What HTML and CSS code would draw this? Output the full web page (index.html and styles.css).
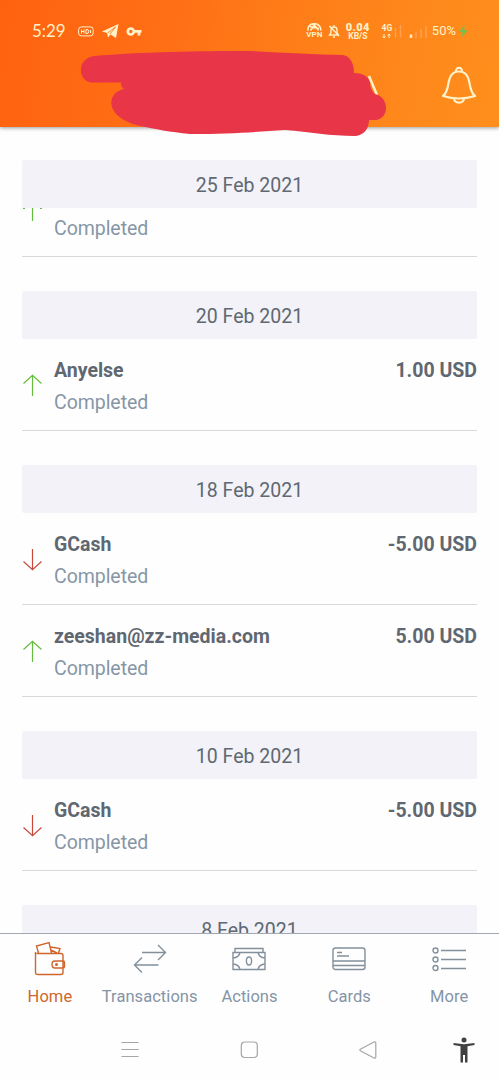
FILE: index.html
```html
<!DOCTYPE html>
<html lang="en">
<head>
<meta charset="utf-8">
<title>Transactions</title>
<link rel="stylesheet" href="styles.css">
</head>
<body>
<div class="app">
  <header class="top">
    <div class="status">
      <span class="clock">5:29</span>
      <svg class="s-hd" width="16" height="11" viewBox="0 0 16 11"><rect x=".6" y=".9" width="14.6" height="9" rx="2.8"/><path d="M3.500 3.500v4M6 3.500v4M3.500 5.500H6M8 3.500v4h1q1.700 0 1.700-2t-1.700-2zM12.500 4v3"/></svg>
      <svg class="s-plane" width="17" height="15" viewBox="0 0 17 15"><path d="M0 7.500 16.500 0 14 14 8.500 10.500 6 13.500 5 9z"/><path class="fold" d="M5.500 9 13.500 3 8 10"/></svg>
      <svg class="s-key" width="16" height="11" viewBox="0 0 16 11"><circle cx="4.800" cy="5.500" r="3"/><path d="M8 5.300h7.500M13 5.500v4"/></svg>
      <div class="status-right">
        <div class="vpn"><svg width="15" height="8" viewBox="0 0 15 8"><path d="M1 7.500C0 -1.500 14 -1.500 14 7.500M3.500 7.500 7.500 2l4 5.500M3 3.500l9 2M5.500 1l4 4"/></svg><span>VPN</span></div>
        <svg class="s-mute" width="12" height="14" viewBox="0 0 12 14"><path d="M1.500 11h9L9 8.500V6Q9 3 6 3T3 6v2.500zM6 1v2M5 13h2M1.500 2l9.500 10"/></svg>
        <div class="speed"><b>0.04</b><span>KB/S</span></div>
        <div class="net"><span>4G</span><svg width="9" height="6" viewBox="0 0 9 6"><path d="M2 1v4M.5 3.500 2 5l1.500-1.500M7 5V1M5.500 2.500 7 1l1.500 1.500"/></svg></div>
        <svg class="bars b1" width="8" height="14" viewBox="0 0 8 14"><path d="M1.500 4v9.500M6.500 1v12.500"/></svg>
        <svg class="bars b2" width="19" height="14" viewBox="0 0 19 14"><path class="on" d="M2 10.500v3.500"/><path d="M7 8v6M12 5v9M17 2v12"/></svg>
        <span class="percent">50%</span>
        <svg class="bolt" width="9" height="12" viewBox="0 0 9 12"><path d="M5.500 0 0 7h3.500L3 12l6-7H5.200z"/></svg>
      </div>
    </div>
    <div class="bell">
      <svg width="36" height="38" viewBox="0 0 36 38"><path d="M2 30Q6 27 7.500 17C9 8 12.500 5.500 18 5.500S27 8 28.500 17Q30 27 34 30 18 35 2 30z"/><path d="M15 5.500C14.500 0.500 21.500 0.500 21 5.500M13 32.500C13.500 38 22.500 38 23 32.500"/></svg>
    </div>
    <svg class="scribble" width="320" height="100" viewBox="75 45 320 100">
      <path class="letter" d="M369 76 377 95"/>
      <path d="M94 56C140 52 200 51 250 51Q300 54 343 55C350 56 354 63 354 73Q367 73 370 82 370 90 375 94C389 97 390 118 376 120H369C369 131 361 136 355 136 330 136 310 132 285 130 255 132 230 134 190 134 170 132 155 129 140 126 105 118 105 93 124 89Q120 86 121 82.500H91C77 80 77 58 94 56z"/>
    </svg>
  </header>

  <main class="list">
    <section class="group">
      <h2 class="date">25 Feb 2021</h2>
      <div class="row clipped"><svg class="arrow up" width="20" height="14" viewBox="0 9 20 14"><path d="M10.500 9v13M1 9.500h2M18 9.500h2"/></svg><p class="state">Completed</p></div>
    </section>
    <section class="group">
      <h2 class="date">20 Feb 2021</h2>
      <div class="row"><svg class="arrow up" width="20" height="23" viewBox="0 0 20 23"><path d="M10.500 22V1.500M1.500 9.500l9-8.200 9 8.200"/></svg><div class="info"><p class="name">Anyelse</p><p class="state">Completed</p></div><p class="amount">1.00 USD</p></div>
    </section>
    <section class="group">
      <h2 class="date">18 Feb 2021</h2>
      <div class="row"><svg class="arrow down" width="20" height="23" viewBox="0 0 20 23"><path d="M10.500 1v20.500M1.500 13.500l9 8.200 9-8.200"/></svg><div class="info"><p class="name">GCash</p><p class="state">Completed</p></div><p class="amount">-5.00 USD</p></div>
      <div class="row"><svg class="arrow up" width="20" height="23" viewBox="0 0 20 23"><path d="M10.500 22V1.500M1.500 9.500l9-8.200 9 8.200"/></svg><div class="info"><p class="name">zeeshan@zz-media.com</p><p class="state">Completed</p></div><p class="amount">5.00 USD</p></div>
    </section>
    <section class="group">
      <h2 class="date">10 Feb 2021</h2>
      <div class="row"><svg class="arrow down" width="20" height="23" viewBox="0 0 20 23"><path d="M10.500 1v20.500M1.500 13.500l9 8.200 9-8.200"/></svg><div class="info"><p class="name">GCash</p><p class="state">Completed</p></div><p class="amount">-5.00 USD</p></div>
    </section>
    <section class="group">
      <h2 class="date">8 Feb 2021</h2>
    </section>
  </main>

  <nav class="tabs">
    <a class="tab active"><svg width="34" height="36" viewBox="0 0 34 36"><path d="M3.500 12.500H28q2 0 2 2v17q0 2-2 2H5q-2.500 0-2.500-2.500V11M30 20h-8q-3 0-3 3.500t3 3.500h8q1.500 0 1.500-1.500v-4q0-1.500-1.500-1.500zM5.500 12 3.500 5l12.500-3.500L18.500 12M17.500 6l9.500 1.500L25.500 12M18 9l6 3"/><circle cx="23.500" cy="23.500" r=".8"/></svg><span>Home</span></a>
    <a class="tab"><svg width="34" height="36" viewBox="0 0 34 36"><path d="M9 11.500h23M25 4l7.500 7.500L25 19M25.500 24H2M9 16.500 1.500 24 9 31.500"/></svg><span>Transactions</span></a>
    <a class="tab"><svg width="34" height="36" viewBox="0 0 34 36"><path d="M1 11.500h32v17H1zM3 11.500v-4h28v4M1 17q6-.5 7-5.500M33 17q-6-.5-7-5.500M1 23q6 .5 7 5.500M33 23q-6 .5-7 5.500"/><ellipse cx="17" cy="20" rx="2.600" ry="4"/></svg><span>Actions</span></a>
    <a class="tab"><svg width="34" height="36" viewBox="0 0 34 36"><rect x="1" y="7" width="32" height="21.500" rx="2.500"/><path d="M1 20h32M1 24.500h32M5 11.500h5M5 15h12"/></svg><span>Cards</span></a>
    <a class="tab"><svg width="34" height="36" viewBox="0 0 34 36"><path d="M9 9.500h25M9 18.500h25M9 27.500h25"/><circle cx="3.500" cy="9.500" r="2.500"/><circle cx="3.500" cy="18.500" r="2.500"/><circle cx="3.500" cy="27" r="2.500"/></svg><span>More</span></a>
  </nav>

  <footer class="system">
    <svg class="soft" width="18" height="18" viewBox="0 0 18 18"><path d="M.5 1.500h17M.5 8.500h17M.5 15.500h17"/></svg>
    <svg class="soft" width="18" height="18" viewBox="0 0 18 18"><rect x="1.300" y="1" width="16" height="15.500" rx="3.500"/></svg>
    <svg class="soft" width="18" height="18" viewBox="0 0 18 18"><path d="M1.300 8.300 15 1q1.800-.6 1.800 1v14q0 1.600-1.800 1L1.300 9.700q-.8-.7 0-1.400z"/></svg>
    <svg class="person" width="22" height="26" viewBox="0 0 22 26"><circle cx="11" cy="3" r="2.500"/><path d="M.5 6 11 7.300 21.500 6v2L14.500 9.200V25.500h-2.500V18h-2v7.500H7.500V9.200L.5 8z"/></svg>
  </footer>
</div>
</body>
</html>
```
FILE: styles.css
```css
* { box-sizing: border-box; }
body { margin: 0; background: #fefefe; font-family: Roboto, "Liberation Sans", sans-serif; }
h2, p { margin: 0; font-weight: 400; }
svg { display: block; flex: none; fill: none; stroke: currentColor; }

.app { width: 499px; height: 1080px; display: flex; flex-direction: column; overflow: hidden; }

.top { position: relative; z-index: 2; height: 127px; flex: none; color: #fff1c8; background: linear-gradient(100deg, #ff620f 0%, #ff7016 35%, #fe8119 65%, #ff8f1d 100%); box-shadow: 0 1px 4px rgba(0, 0, 0, .4); }
.status { height: 46px; padding: 16px 31px 0 32px; display: flex; align-items: center; }
.clock { width: 46px; font-family: Lato, sans-serif; font-size: 17px; letter-spacing: -.1px; line-height: 20px; }
.s-hd { stroke-width: 1; }
.s-plane { margin-left: 8px; fill: currentColor; stroke: none; }
.s-plane .fold { fill: none; stroke: #ff6d14; stroke-width: .8; }
.s-key { margin-left: 7px; stroke-width: 2.700; }
.status-right { flex: 1; display: flex; align-items: center; justify-content: flex-end; }
.vpn { width: 15px; display: flex; flex-direction: column; align-items: center; font-size: 8px; font-weight: 700; line-height: 8px; }
.vpn svg { stroke-width: 1.600; }
.s-mute { margin-left: 6px; stroke-width: 1.400; }
.speed { width: 24px; margin-left: 6px; display: flex; flex-direction: column; align-items: center; font-size: 8.500px; line-height: 8px; font-weight: 700; }
.speed b { font-size: 11px; line-height: 11px; margin-top: -1px; letter-spacing: .4px; }
.speed span { margin-top: -1px; }
.net { width: 12px; margin-left: 11px; display: flex; flex-direction: column; align-items: center; font-size: 8.500px; font-weight: 700; line-height: 9px; }
.bars { stroke-width: 1.500; opacity: .9; stroke: #ffa354; }
.bars .on { stroke: #fff1c8; stroke-width: 2.500; }
.b1 { margin-left: 1px; }
.b2 { margin-left: 7px; }
.percent { margin-left: 4px; font-size: 13px; line-height: 16px; }
.bolt { margin-left: 3px; fill: #79be4b; stroke: none; }
.bell { display: flex; justify-content: flex-end; padding: 20px 22px 0 0; }
.bell svg { stroke-width: 2.200; stroke-linejoin: round; }
.scribble { position: absolute; left: 75px; top: 45px; fill: #e83548; stroke: none; }
.scribble .letter { stroke: #fff1c8; stroke-width: 2.500; }

.list { flex: none; height: 806px; padding: 33px 22px 0; display: flex; flex-direction: column; gap: 34px; overflow: hidden; }
.group { flex: none; }
.date { height: 48px; background: #f2f2f8; color: #606872; border-radius: 2px; font-size: 19.500px; line-height: 52px; text-align: center; }
.row { height: 92px; display: flex; align-items: flex-start; border-bottom: 1px solid #d6d8dc; }
.row.clipped { height: 49px; gap: 12px; }
.clipped .state { padding-top: 5px; }
.arrow { stroke-width: 1.200; }
.row:not(.clipped) .arrow { margin-top: 35px; }
.up { color: #65bd3d; }
.down { color: #c9493b; }
.info { flex: 1; padding: 16px 0 0 12px; }
.name, .amount { color: #5f6771; font-size: 19.500px; line-height: 32px; font-weight: 700; }
.amount { padding-top: 16px; }
.state { color: #8796a6; font-size: 19.500px; line-height: 32px; letter-spacing: -.05px; }

.tabs { flex: none; height: 77px; border-top: 1px solid #a0a8b2; display: grid; grid-template-columns: repeat(5, 1fr); background: #fefefe; }
.tab { display: flex; flex-direction: column; align-items: center; padding-top: 7px; color: #8494a6; font-size: 16.500px; line-height: 20px; letter-spacing: .05px; }
.tab svg { color: #83909c; stroke-width: 1.400; }
.tab span { margin-top: 10px; }
.tab.active, .tab.active svg { color: #cf662d; }

.system { flex: none; height: 70px; padding: 27px 25px 0 121px; display: flex; align-items: flex-start; justify-content: flex-start; }
.soft { color: #a5a5a5; stroke-width: 1.200; margin: 4px 101px 0 0; }
.soft:nth-child(3) { margin-right: 76px; }
.person { fill: #414141; stroke: none; }
```
